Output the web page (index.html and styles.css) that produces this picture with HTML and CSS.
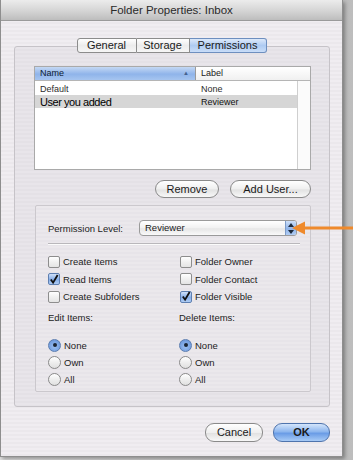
FILE: index.html
```html
<!DOCTYPE html>
<html lang="en">
<head>
    <meta charset="UTF-8">
    <title>Folder Properties: Inbox</title>
    <link rel="stylesheet" href="styles.css">
</head>
<body>
    <div class="window">
        <div class="titlebar">Folder Properties: Inbox</div>

        <div class="tabs">
            <span class="tab tab-general">General</span>
            <span class="tab tab-storage">Storage</span>
            <span class="tab tab-perm selected">Permissions</span>
        </div>

        <div class="tabbox">
            <div class="list">
                <div class="list-head">
                    <div class="head-name">Name<span class="sort">&#9650;</span></div>
                    <div class="head-label">Label</div>
                </div>
                <div class="list-body">
                    <div class="rows">
                        <div class="row"><span class="c-name">Default</span><span class="c-label">None</span></div>
                        <div class="row selected"><span class="c-name big">User you added</span><span class="c-label">Reviewer</span></div>
                    </div>
                    <div class="scroller"></div>
                </div>
            </div>

            <div class="list-buttons">
                <button class="pill btn-remove">Remove</button>
                <button class="pill btn-add">Add User...</button>
            </div>

            <div class="group">
                <div class="level-row">
                    <span class="level-label">Permission Level:</span>
                    <div class="popup">
                        <span class="popup-text">Reviewer</span>
                        <span class="popup-arrows">
                            <svg width="6" height="11" viewBox="0 0 6 11"><path d="M0 4 L3 0 L6 4 Z M0 7 L3 11 L6 7 Z" fill="#1d2a3c"/></svg>
                        </span>
                    </div>
                </div>
                <div class="sep"></div>

                <div class="checks">
                    <label class="check"><span class="box"></span>Create Items</label>
                    <label class="check"><span class="box"></span>Folder Owner</label>
                    <label class="check"><span class="box on"><svg width="11" height="11" viewBox="0 0 11 11"><path d="M2 5.5 L4.5 9 L9.5 0.5" fill="none" stroke="#111" stroke-width="2"/></svg></span>Read Items</label>
                    <label class="check"><span class="box"></span>Folder Contact</label>
                    <label class="check"><span class="box"></span>Create Subfolders</label>
                    <label class="check"><span class="box on"><svg width="11" height="11" viewBox="0 0 11 11"><path d="M2 5.5 L4.5 9 L9.5 0.5" fill="none" stroke="#111" stroke-width="2"/></svg></span>Folder Visible</label>
                </div>

                <div class="radio-cols">
                    <div class="radio-col">
                        <div class="radio-head">Edit Items:</div>
                        <div class="radio"><span class="dot on"></span>None</div>
                        <div class="radio"><span class="dot"></span>Own</div>
                        <div class="radio"><span class="dot"></span>All</div>
                    </div>
                    <div class="radio-col">
                        <div class="radio-head">Delete Items:</div>
                        <div class="radio"><span class="dot on"></span>None</div>
                        <div class="radio"><span class="dot"></span>Own</div>
                        <div class="radio"><span class="dot"></span>All</div>
                    </div>
                </div>
            </div>
        </div>

        <div class="footer">
            <button class="pill btn-cancel">Cancel</button>
            <button class="pill btn-ok">OK</button>
        </div>
    </div>

    <!-- callout arrow drawn over the screenshot -->
    <svg class="callout" width="62" height="16" viewBox="0 0 62 16">
        <path d="M12 8 H62" stroke="#ef8a2c" stroke-width="3"/>
        <path d="M0 8 L13 1.5 L13 14.5 Z" fill="#ef8a2c"/>
    </svg>
</body>
</html>
```

FILE: styles.css
```css
* {
    box-sizing: border-box;
}
body {
    margin: 0;
    width: 353px;
    height: 460px;
    background: linear-gradient(90deg, #e2e2e2, #bdbdbd);
    font-family: "Liberation Sans", Arial, sans-serif;
    color: #1a1a1a;
    position: relative;
    overflow: hidden;
}
.window {
    width: 343px;
    height: 457px;
    border: 1px solid #8e8e8e;
    border-top: none;
    background: repeating-linear-gradient(#f0edf1 0 2px, #ebe8ec 2px 4px);
    box-shadow: 2px 2px 4px rgba(0, 0, 0, 0.35);
}
.titlebar {
    height: 21px;
    line-height: 20px;
    text-align: center;
    font-size: 11.5px;
    color: #2a2a2a;
    background: linear-gradient(#ececec, #d2d2d2 60%, #bdbdbd);
    border-bottom: 1px solid #9a9a9a;
}
.tabs {
    display: flex;
    justify-content: center;
    margin-top: 17px;
    height: 15px;
    position: relative;
    z-index: 1;
}
.tab {
    height: 15px;
    line-height: 13px;
    font-size: 11px;
    text-align: center;
    background: linear-gradient(#ffffff, #ececec 50%, #f6f6f6);
    border: 1px solid #8c8c8c;
    border-left: none;
}
.tab-general {
    width: 60px;
    border-left: 1px solid #8c8c8c;
    border-radius: 3px 0 0 3px;
}
.tab-storage {
    width: 53px;
}
.tab-perm {
    width: 77px;
    border-radius: 0 3px 3px 0;
}
.tab.selected {
    background: linear-gradient(#dde9fa, #aecbf2 50%, #c9ddf8);
    border-color: #6e8fbf;
}
.tabbox {
    margin: -7px 0 0 13px;
    width: 316px;
    border: 1px solid #c6c3c8;
    border-radius: 3px;
    background: repeating-linear-gradient(#e8e5ea 0 2px, #e4e1e6 2px 4px);
    padding: 19px 0 14px 19px;
}
.list {
    width: 277px;
    height: 104px;
    border: 1px solid #a9a9a9;
    background: #ffffff;
    display: flex;
    flex-direction: column;
}
.list-head {
    display: flex;
    height: 14px;
    font-size: 9px;
    line-height: 13px;
    border-bottom: 1px solid #b5b5b5;
}
.head-name {
    width: 161px;
    padding-left: 5px;
    background: linear-gradient(#c4d8f4, #8fb4ea 55%, #a6c5f0);
    border-right: 1px solid #9a9a9a;
    color: #0d1a33;
    position: relative;
}
.sort {
    position: absolute;
    right: 6px;
    top: 0;
    font-size: 6px;
    color: #44618e;
}
.head-label {
    flex: 1;
    padding-left: 5px;
    background: linear-gradient(#ffffff, #f0f0f0);
}
.list-body {
    flex: 1;
    display: flex;
}
.rows {
    flex: 1;
    padding-top: 1px;
}
.scroller {
    width: 13px;
    border-left: 1px solid #cfcfcf;
    background: #fbfbfb;
}
.row {
    display: flex;
    height: 13px;
    align-items: center;
    font-size: 9px;
    color: #2d2d2d;
}
.row.selected {
    background: #d6d6d6;
    color: #111;
}
.c-name {
    width: 161px;
    padding-left: 5px;
}
.c-name.big {
    font-size: 11px;
    letter-spacing: -0.45px;
    color: #000;
}
.c-label {
    padding-left: 5px;
}
.list-buttons {
    width: 277px;
    display: flex;
    justify-content: flex-end;
    gap: 11px;
    margin-top: 10px;
}
.pill {
    height: 18px;
    padding: 0;
    font-family: "Liberation Sans", Arial, sans-serif;
    font-size: 11px;
    color: #1a1a1a;
    border: 1px solid #8a8a8a;
    border-radius: 9px;
    background: linear-gradient(#ffffff, #efefef 50%, #e2e2e2 55%, #f8f8f8);
}
.btn-remove {
    width: 64px;
}
.btn-add {
    width: 81px;
}
.group {
    margin: 7px 0 0 1px;
    width: 276px;
    border: 1px solid #cbc8cd;
    border-radius: 2px;
    background: repeating-linear-gradient(#ebe8ec 0 2px, #e7e4e9 2px 4px);
    padding: 14px 0 3px 12px;
    font-size: 9.5px;
}
.level-row {
    display: flex;
    align-items: center;
    height: 16px;
}
.level-label {
    width: 91px;
    color: #222;
}
.popup {
    width: 158px;
    height: 16px;
    display: flex;
    border: 1px solid #9a9a9a;
    border-radius: 4px 3px 3px 4px;
    background: linear-gradient(#ffffff, #f1f1f1 50%, #e6e6e6 55%, #fafafa);
    overflow: hidden;
}
.popup-text {
    flex: 1;
    padding-left: 5px;
    line-height: 14px;
}
.popup-arrows {
    width: 11px;
    display: flex;
    align-items: center;
    justify-content: center;
    background: linear-gradient(#cfe0f8, #8fb4ea 55%, #b2cdf3);
    border-left: 1px solid #7d9cc9;
}
.sep {
    width: 252px;
    height: 2px;
    margin-top: 7px;
    border-top: 1px solid #b9b7bb;
    border-bottom: 1px solid #fbfbfb;
}
.checks {
    display: grid;
    grid-template-columns: 132px 1fr;
    grid-auto-rows: 17.5px;
    margin-top: 8px;
}
.check {
    display: flex;
    align-items: center;
    gap: 3px;
    color: #222;
}
.box {
    width: 12px;
    height: 12px;
    border: 1px solid #8d8d8d;
    border-radius: 2px;
    background: linear-gradient(#ffffff, #f0f0f0 50%, #e4e4e4);
    display: flex;
    align-items: center;
    justify-content: center;
}
.box.on {
    border-color: #5e7fb1;
    background: linear-gradient(#cfe0f8, #86aee9 55%, #aecbf3);
}
.radio-cols {
    display: grid;
    grid-template-columns: 131px 1fr;
    margin-top: 5.5px;
}
.radio-head {
    height: 14px;
    line-height: 14px;
    margin-bottom: 11.5px;
    color: #222;
}
.radio {
    height: 17px;
    display: flex;
    align-items: center;
    gap: 3px;
    color: #222;
}
.dot {
    width: 13px;
    height: 13px;
    border: 1px solid #8a8a8a;
    border-radius: 50%;
    background: linear-gradient(#ffffff, #eeeeee 50%, #e0e0e0);
    display: flex;
    align-items: center;
    justify-content: center;
}
.dot.on {
    border-color: #5a7cb0;
    background: radial-gradient(circle at 50% 60%, #9cc0f2, #5f8ed7);
}
.dot.on::after {
    content: "";
    width: 4px;
    height: 4px;
    border-radius: 50%;
    background: #1b2533;
}
.footer {
    display: flex;
    justify-content: flex-end;
    gap: 10px;
    padding-right: 12px;
    margin-top: 16px;
}
.btn-cancel {
    width: 58px;
    height: 19px;
}
.btn-ok {
    width: 57px;
    height: 19px;
    font-weight: bold;
    border-color: #4f74ad;
    background: linear-gradient(#d4e5fb, #8db6ee 45%, #6a9ce6 55%, #a8cbf6);
}
.callout {
    position: absolute;
    left: 292px;
    top: 220px;
}
```
